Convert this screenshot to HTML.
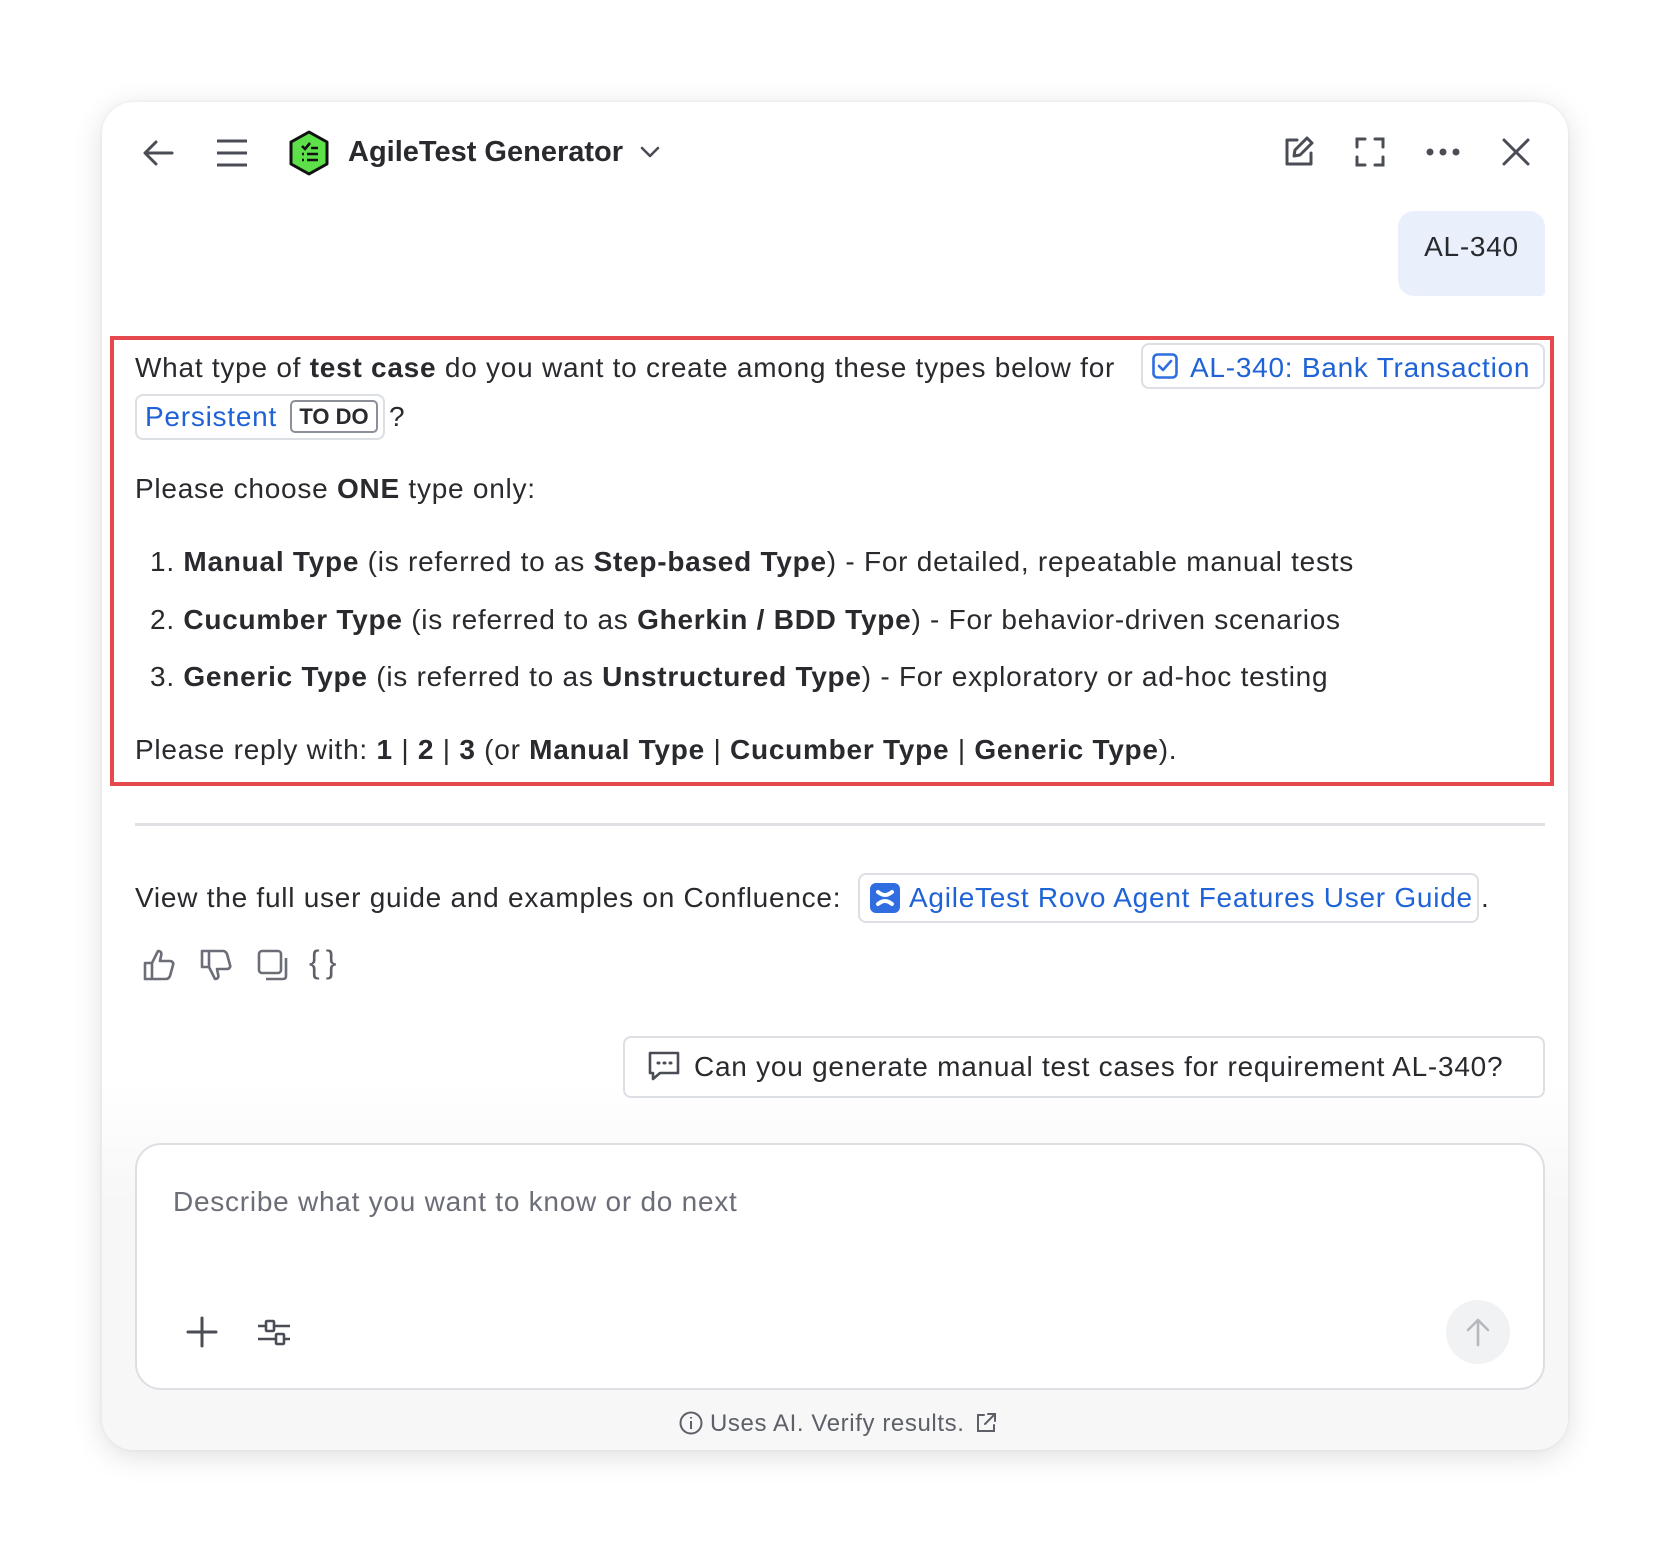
<!DOCTYPE html>
<html><head><meta charset="utf-8"><style>
*{box-sizing:border-box;margin:0;padding:0}
body{width:1662px;height:1546px;background:#fff;font-family:"Liberation Sans",sans-serif;color:#292a2e;position:relative;overflow:hidden}
.card{position:absolute;left:102px;top:102px;width:1466px;height:1348px;border-radius:32px;background:#fff;box-shadow:0 6px 30px rgba(0,0,0,.13),0 0 4px rgba(0,0,0,.06);overflow:hidden}
.grad{position:absolute;left:0;right:0;top:980px;bottom:0;background:linear-gradient(#fff,#f7f7f8 120px)}
.abs{position:absolute}
.t{position:absolute;font-size:28px;white-space:nowrap;line-height:34px;letter-spacing:0.75px}
b{font-weight:bold}
.link{color:#1f63d6}
.chip{position:absolute;border:2px solid #dcdfe4;border-radius:8px;background:#fff}
svg{position:absolute;overflow:visible}
</style></head><body>
<div class="card">
<div class="grad"></div>
<svg style="left:40px;top:35px" width="32" height="32" viewBox="0 0 32 32" fill="none" stroke="#4a4d55" stroke-width="3" stroke-linecap="round" stroke-linejoin="round"><path d="M30 16H4M14 5 3 16l11 11"/></svg>
<svg style="left:115px;top:36px" width="30" height="30" viewBox="0 0 30 30" stroke="#4a4d55" stroke-width="3"><path d="M0 3h30M0 15h30M0 27h30"/></svg>
<svg style="left:186px;top:28px" width="42" height="46" viewBox="0 0 42 46"><path d="M21 2 39 12v22L21 44 3 34V12z" fill="#5ee04a" stroke="#111" stroke-width="3" stroke-linejoin="round"/><path d="M14 16l3 3 5-6M23 18h7M14 24h2M19 24h11M14 30h2M19 30h11" stroke="#111" stroke-width="2.6" fill="none"/></svg>
<div class="t" style="left:246px;top:33px;font-size:29px;font-weight:bold;letter-spacing:0">AgileTest Generator</div>
<svg style="left:538px;top:44px" width="20" height="12" viewBox="0 0 20 12" fill="none" stroke="#4a4d55" stroke-width="2.6" stroke-linecap="round" stroke-linejoin="round"><path d="M2 2l8 8 8-8"/></svg>
<svg style="left:1182px;top:34px" width="30" height="30" viewBox="0 0 30 30" fill="none" stroke="#4a4d55" stroke-width="3" stroke-linecap="round" stroke-linejoin="round"><path d="M13 4H3v24h24V17"/><path d="M23 2l5 5-12 12-6 1 1-6z"/></svg>
<svg style="left:1254px;top:36px" width="28" height="28" viewBox="0 0 28 28" fill="none" stroke="#4a4d55" stroke-width="3" stroke-linecap="round"><path d="M1 9V1h8M19 1h8v8M27 19v8h-8M9 27H1v-8"/></svg>
<svg style="left:1324px;top:46px" width="34" height="8" viewBox="0 0 34 8" fill="#4a4d55"><circle cx="4" cy="4" r="3.5"/><circle cx="17" cy="4" r="3.5"/><circle cx="30" cy="4" r="3.5"/></svg>
<svg style="left:1400px;top:36px" width="28" height="28" viewBox="0 0 28 28" stroke="#4a4d55" stroke-width="3" stroke-linecap="round"><path d="M2 2l24 24M26 2 2 26"/></svg>
<div class="abs" style="left:1296px;top:109px;width:147px;height:85px;background:#e9f0fc;border-radius:16px 16px 4px 16px"></div>
<div class="t" style="left:1296px;top:128px;width:147px;text-align:center">AL-340</div>
<div class="abs" style="left:8px;top:234px;width:1444px;height:450px;border:4px solid #e5484d"></div>
<div class="chip" style="left:1039px;top:241px;width:404px;height:46px"></div>
<svg style="left:1050px;top:251px" width="26" height="26" viewBox="0 0 26 26" fill="none" stroke="#2f6de0" stroke-width="2.6" stroke-linejoin="round" stroke-linecap="round"><rect x="1.5" y="1.5" width="23" height="23" rx="4"/><path d="M7 13l4 4 8-9"/></svg>
<div class="t" style="left:33px;top:249px">What type of <b>test case</b> do you want to create among these types below for</div>
<div class="t link" style="left:1088px;top:249px">AL-340: Bank Transaction</div>
<div class="chip" style="left:33px;top:292px;width:250px;height:46px"></div>
<div class="t link" style="left:43px;top:298px">Persistent</div>
<div class="abs" style="left:188px;top:298px;width:88px;height:33px;border:2px solid #8c8f97;border-radius:5px;font-size:22px;font-weight:bold;line-height:29px;text-align:center">TO DO</div>
<div class="t" style="left:287px;top:298px">?</div>
<div class="t" style="left:33px;top:370px">Please choose <b>ONE</b> type only:</div>
<div class="t" style="left:48px;top:443px">1. <b>Manual Type</b> (is referred to as <b>Step-based Type</b>) - For detailed, repeatable manual tests</div>
<div class="t" style="left:48px;top:501px">2. <b>Cucumber Type</b> (is referred to as <b>Gherkin / BDD Type</b>) - For behavior-driven scenarios</div>
<div class="t" style="left:48px;top:558px">3. <b>Generic Type</b> (is referred to as <b>Unstructured Type</b>) - For exploratory or ad-hoc testing</div>
<div class="t" style="left:33px;top:631px">Please reply with: <b>1</b> | <b>2</b> | <b>3</b> (or <b>Manual Type</b> | <b>Cucumber Type</b> | <b>Generic Type</b>).</div>
<div class="abs" style="left:33px;top:721px;width:1410px;height:3px;background:#dfe1e5"></div>
<div class="t" style="left:33px;top:779px">View the full user guide and examples on Confluence:</div>
<div class="chip" style="left:756px;top:771px;width:621px;height:50px"></div>
<svg style="left:768px;top:781px" width="30" height="30" viewBox="0 0 30 30"><rect width="30" height="30" rx="6" fill="#2f6de0"/><path d="M8 9c5 4 9 4 14 0M8 21c5-4 9-4 14 0" stroke="#fff" stroke-width="4" fill="none" stroke-linecap="round"/></svg>
<div class="t link" style="left:807px;top:779px">AgileTest Rovo Agent Features User Guide</div>
<div class="t" style="left:1379px;top:779px">.</div>
<svg style="left:41px;top:847px" width="32" height="32" viewBox="0 0 32 32" fill="none" stroke="#6b6e76" stroke-width="2.6" stroke-linejoin="round"><path d="M2 14h7v16H2zM9 14l6-12c3 0 4 2 3 5l-1 5h10c2 0 4 2 3 4l-3 11c-1 2-2 3-4 3H9"/></svg>
<svg style="left:98px;top:847px" width="32" height="32" viewBox="0 0 32 32" fill="none" stroke="#6b6e76" stroke-width="2.6" stroke-linejoin="round"><path d="M2 2h7v16H2zM9 18l6 12c3 0 4-2 3-5l-1-5h10c2 0 4-2 3-4L27 5c-1-2-2-3-4-3H9"/></svg>
<svg style="left:155px;top:847px" width="32" height="32" viewBox="0 0 32 32" fill="none" stroke="#6b6e76" stroke-width="2.6" stroke-linejoin="round"><rect x="2" y="2" width="22" height="22" rx="3"/><path d="M29 9v18c0 2-1 3-3 3H9"/></svg>
<div class="t" style="left:207px;top:843px;color:#5d6068;font-size:32px;letter-spacing:6px">{}</div>
<div class="abs" style="left:521px;top:934px;width:922px;height:62px;border:2px solid #dcdfe4;border-radius:8px;background:#fff"></div>
<svg style="left:546px;top:949px" width="32" height="30" viewBox="0 0 32 30" fill="none" stroke="#4a4d55" stroke-width="2.6" stroke-linejoin="round"><path d="M2 2h28v20H12l-7 6v-6H2z"/><path d="M10 12h1M16 12h1M22 12h1" stroke-width="3" stroke-linecap="round"/></svg>
<div class="t" style="left:592px;top:948px">Can you generate manual test cases for requirement AL-340?</div>
<div class="abs" style="left:33px;top:1041px;width:1410px;height:247px;border:2px solid #dcdfe4;border-radius:26px;background:#fff"></div>
<div class="t" style="left:71px;top:1083px;color:#6b6e76">Describe what you want to know or do next</div>
<svg style="left:85px;top:1215px" width="30" height="30" viewBox="0 0 30 30" stroke="#4a4d55" stroke-width="3" stroke-linecap="round"><path d="M15 1v28M1 15h28"/></svg>
<svg style="left:155px;top:1215px" width="34" height="30" viewBox="0 0 34 30" fill="none" stroke="#4a4d55" stroke-width="2.6"><path d="M1 9h8M17 9h16M1 22h18M27 22h6"/><rect x="9" y="4" width="8" height="10" rx="1"/><rect x="19" y="17" width="8" height="10" rx="1"/></svg>
<div class="abs" style="left:1344px;top:1198px;width:64px;height:64px;border-radius:50%;background:#f1f2f4"></div>
<svg style="left:1364px;top:1216px" width="24" height="28" viewBox="0 0 24 28" fill="none" stroke="#b6b8be" stroke-width="2.6" stroke-linecap="round" stroke-linejoin="round"><path d="M12 27V2M2 12 12 2l10 10"/></svg>
<svg style="left:577px;top:1309px" width="24" height="24" viewBox="0 0 24 24" fill="none" stroke="#5d6068" stroke-width="2"><circle cx="12" cy="12" r="10.5"/><path d="M12 10v8M12 6v1.5"/></svg>
<div class="t" style="left:608px;top:1305px;font-size:24px;color:#5d6068;letter-spacing:0.6px">Uses AI. Verify results.</div>
<svg style="left:873px;top:1310px" width="22" height="22" viewBox="0 0 22 22" fill="none" stroke="#5d6068" stroke-width="2" stroke-linecap="round"><path d="M9 3H3v16h16v-6M13 2h7v7M20 2 10 12"/></svg>
</div>
</body></html>
